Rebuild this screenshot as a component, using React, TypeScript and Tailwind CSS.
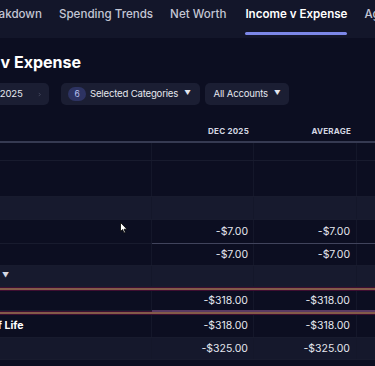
import { ChevronRight } from 'lucide-react';

const tabs = ['Spending Breakdown', 'Spending Trends', 'Net Worth', 'Income v Expense', 'Age of Money'];

type CellRowProps = {
  name?: string;
  bold?: boolean;
  dec?: string;
  avg?: string;
  height: string;
  bg?: string;
  caret?: boolean;
  totalLine?: string;
};

const CellRow = ({ name, bold, dec, avg, height, bg = 'bg-[#0c0e21]', caret, totalLine }: CellRowProps): JSX.Element => {
  return (
    <div className={`relative grid grid-cols-[152px_102px_103px_1fr] border-b border-[#181b2e] ${height} ${bg}`}>
      <div className="flex items-center overflow-hidden border-r border-[#14172a]">
        {caret && <span className="pl-[2px] text-[7px] text-[#d6d8e3]">▼</span>}
        {name && (
          <span className={`-ml-[48px] whitespace-nowrap text-[10.5px] text-white ${bold ? 'font-bold' : ''}`}>
            {name}
          </span>
        )}
      </div>
      <div className="flex items-center justify-end border-r border-[#14172a] pr-[5px] text-[10.5px] text-[#e4e6ee]">
        {dec}
      </div>
      <div className="flex items-center justify-end border-r border-[#14172a] pr-[6px] text-[10.5px] text-[#e4e6ee]">
        {avg}
      </div>
      <div />
      {totalLine && <div className={`absolute bottom-[-2px] left-[152px] right-0 h-[2px] ${totalLine}`} />}
    </div>
  );
};

const FocusEdge = (): JSX.Element => (
  <div className="flex flex-col">
    <div className="h-[1px] bg-[#3e0d31]" />
    <div className="h-[2px] bg-[#835b49]" />
    <div className="h-[1px] bg-[#3e0d31]" />
  </div>
);

const App = (): JSX.Element => {
  return (
    <div className="relative h-[366px] w-[375px] overflow-hidden bg-[#0c0e21] font-['Inter',sans-serif]">
      <div className="h-[38px] bg-[#13162a]">
        <div className="-ml-[76px] flex whitespace-nowrap pt-[5px]">
          {tabs.map((tab, i) => (
            <div key={tab} className={`flex flex-col items-stretch ${i === 0 ? '' : i === 3 ? 'ml-[19px]' : 'ml-[17px]'}`}>
              <span
                className={`text-[11.6px] leading-[18px] ${
                  tab === 'Income v Expense' ? 'font-semibold text-white' : 'font-medium text-[#c3c6d4]'
                }`}
              >
                {tab}
              </span>
              <div className={`mt-[9px] h-[3px] rounded-full ${tab === 'Income v Expense' ? 'bg-[#7c87e8]' : ''}`} />
            </div>
          ))}
        </div>
      </div>

      <h1 className="-ml-[61px] mt-[13px] whitespace-nowrap text-[16px] font-bold leading-[22px] text-white">
        {'Income v Expense'}
      </h1>

      <div className="mt-[10px] flex items-center whitespace-nowrap text-[9.6px] tracking-[-0.02em] text-[#e4e6ee]">
        <div className="-ml-[71px] flex h-[22px] w-[120px] items-center justify-end gap-[14px] rounded-[5px] bg-[#1b1e33] pr-[7px]">
          <span>{'Jan 2025 – Dec 2025'}</span>
          <ChevronRight size={11} className="text-[#6a6e86]" />
        </div>
        <div className="ml-[12px] flex h-[22px] items-center rounded-[5px] bg-[#1b1e33] pl-[7px] pr-[9px]">
          <span className="mr-[4px] flex h-[14px] w-[18px] items-center justify-center rounded-full bg-[#2d3362] text-[8.5px] text-[#b9c1f2]">
            {'6'}
          </span>
          <span>{'Selected Categories'}</span>
          <span className="ml-[6px] text-[6.5px]">▼</span>
        </div>
        <div className="ml-[5px] flex h-[22px] items-center rounded-[5px] bg-[#1b1e33] pl-[9px] pr-[9px]">
          <span>{'All Accounts'}</span>
          <span className="ml-[6px] text-[6.5px]">▼</span>
        </div>
      </div>

      <div className="mt-[16px]">
        <div className="grid h-[22px] grid-cols-[152px_102px_103px_1fr] border-b-2 border-[#363a52] text-[8px] font-bold tracking-[0.03em] text-[#d4d7e2]">
          <div />
          <div className="flex items-center justify-end pr-[5px]">{'DEC 2025'}</div>
          <div className="flex items-center justify-end pr-[6px]">{'AVERAGE'}</div>
          <div />
        </div>
        <CellRow height="h-[18px]" />
        <CellRow height="h-[36px]" />
        <CellRow height="h-[23px]" bg="bg-[#171a2e]" />
        <CellRow height="h-[24px]" dec="-$7.00" avg="-$7.00" totalLine="bg-[#41445c]" />
        <CellRow height="h-[22px]" dec="-$7.00" avg="-$7.00" />
        <CellRow height="h-[21px]" bg="bg-[#171a2e]" caret />
        <FocusEdge />
        <CellRow height="h-[20px]" dec="-$318.00" avg="-$318.00" totalLine="bg-[#5b3a63]" />
        <FocusEdge />
        <CellRow height="h-[23px]" name="Quality of Life" bold dec="-$318.00" avg="-$318.00" />
        <CellRow height="h-[22px]" bg="bg-[#15182c]" dec="-$325.00" avg="-$325.00" />
      </div>

      <svg className="absolute left-[120px] top-[222px]" width="8" height="12" viewBox="0 0 8 12">
        <path d="M0.5 0.5 L0.5 9.5 L2.6 7.6 L4 11 L5.4 10.4 L4.1 7.2 L7 7.2 Z" fill="#ffffff" stroke="#000000" strokeWidth="0.8" />
      </svg>
    </div>
  );
};

export default App;
